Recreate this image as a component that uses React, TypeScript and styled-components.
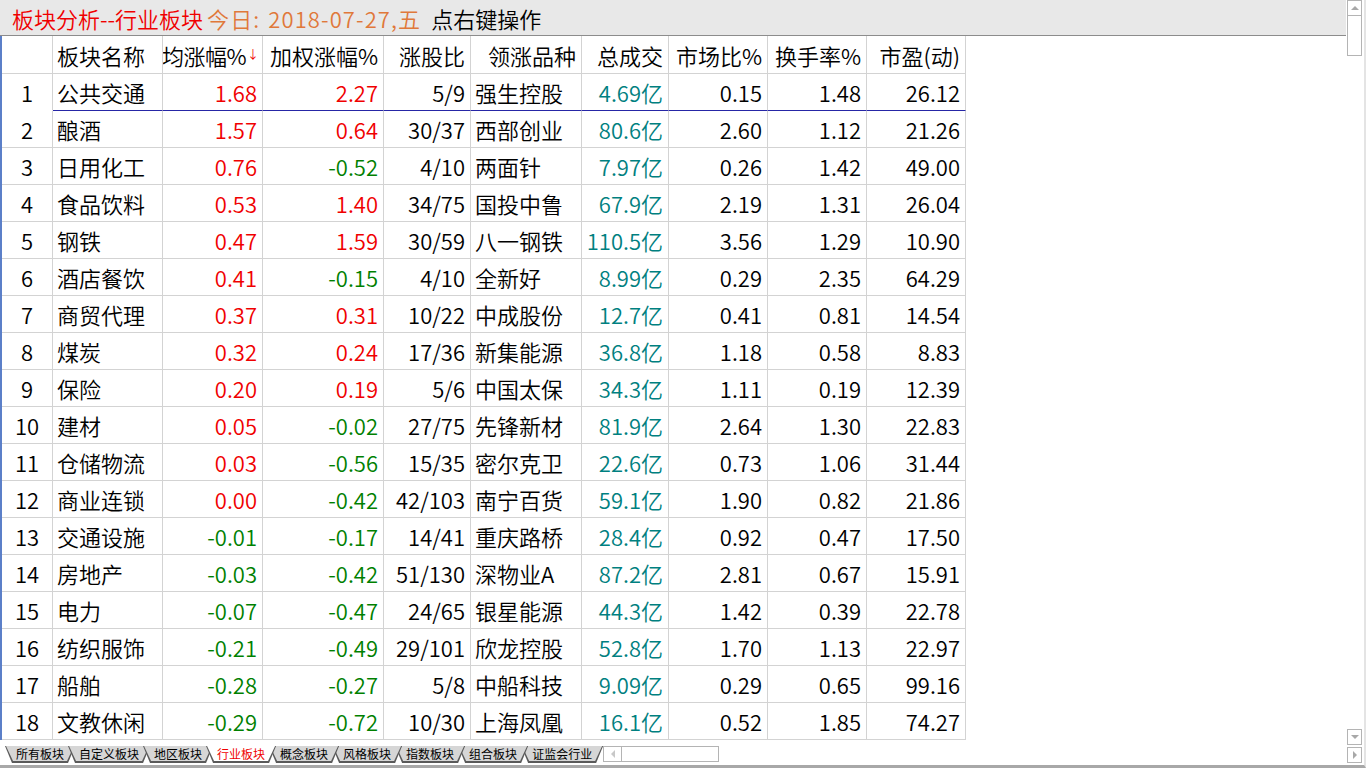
import React from 'react';
import styled, { createGlobalStyle, css } from 'styled-components';

const GlobalStyle = createGlobalStyle`
  html, body {
    margin: 0;
    padding: 0;
    background: #ffffff;
    overflow: hidden;
  }
  body {
    font-family: "Noto Sans CJK SC", "Noto Sans", sans-serif;
    font-weight: 350;
  }
`;

type Row = [string, string, string, string, string, string, string, string, string];

const rows: Row[] = [
  ['公共交通', '1.68', '2.27', '5/9', '强生控股', '4.69亿', '0.15', '1.48', '26.12'],
  ['酿酒', '1.57', '0.64', '30/37', '西部创业', '80.6亿', '2.60', '1.12', '21.26'],
  ['日用化工', '0.76', '-0.52', '4/10', '两面针', '7.97亿', '0.26', '1.42', '49.00'],
  ['食品饮料', '0.53', '1.40', '34/75', '国投中鲁', '67.9亿', '2.19', '1.31', '26.04'],
  ['钢铁', '0.47', '1.59', '30/59', '八一钢铁', '110.5亿', '3.56', '1.29', '10.90'],
  ['酒店餐饮', '0.41', '-0.15', '4/10', '全新好', '8.99亿', '0.29', '2.35', '64.29'],
  ['商贸代理', '0.37', '0.31', '10/22', '中成股份', '12.7亿', '0.41', '0.81', '14.54'],
  ['煤炭', '0.32', '0.24', '17/36', '新集能源', '36.8亿', '1.18', '0.58', '8.83'],
  ['保险', '0.20', '0.19', '5/6', '中国太保', '34.3亿', '1.11', '0.19', '12.39'],
  ['建材', '0.05', '-0.02', '27/75', '先锋新材', '81.9亿', '2.64', '1.30', '22.83'],
  ['仓储物流', '0.03', '-0.56', '15/35', '密尔克卫', '22.6亿', '0.73', '1.06', '31.44'],
  ['商业连锁', '0.00', '-0.42', '42/103', '南宁百货', '59.1亿', '1.90', '0.82', '21.86'],
  ['交通设施', '-0.01', '-0.17', '14/41', '重庆路桥', '28.4亿', '0.92', '0.47', '17.50'],
  ['房地产', '-0.03', '-0.42', '51/130', '深物业A', '87.2亿', '2.81', '0.67', '15.91'],
  ['电力', '-0.07', '-0.47', '24/65', '银星能源', '44.3亿', '1.42', '0.39', '22.78'],
  ['纺织服饰', '-0.21', '-0.49', '29/101', '欣龙控股', '52.8亿', '1.70', '1.13', '22.97'],
  ['船舶', '-0.28', '-0.27', '5/8', '中船科技', '9.09亿', '0.29', '0.65', '99.16'],
  ['文教休闲', '-0.29', '-0.72', '10/30', '上海凤凰', '16.1亿', '0.52', '1.85', '74.27'],
];

const tabs = ['所有板块', '自定义板块', '地区板块', '行业板块', '概念板块', '风格板块', '指数板块', '组合板块', '证监会行业'];
const activeTab = 3;

const COLS = '51px 110px 100px 121px 87px 111px 87px 99px 99px 99px';

const Frame = styled.div`
  width: 1366px;
  height: 768px;
  display: flex;
  box-sizing: border-box;
  border-bottom: 3px solid #a8a8a8;
  border-right: 2px solid #e4e4e4;
  overflow: hidden;
`;

const Main = styled.div`
  flex: 1;
  display: flex;
  flex-direction: column;
  min-width: 0;
`;

const TitleBar = styled.div`
  height: 35px;
  border-bottom: 1px solid #8c8c8c;
  background: #e8e8e8;
  display: flex;
  align-items: center;
  padding-left: 12px;
  font-size: 22px;
  white-space: nowrap;
  line-height: 1;
`;

const Title = styled.span<{ $tone: 'red' | 'orange' | 'black' }>`
  color: ${(p) => (p.$tone === 'red' ? '#f00000' : p.$tone === 'orange' ? '#e0783a' : '#000000')};
  margin-right: ${(p) => (p.$tone === 'orange' ? '10px' : '4px')};
  letter-spacing: ${(p) => (p.$tone === 'orange' ? '1.1px' : '0')};
  word-spacing: ${(p) => (p.$tone === 'orange' ? '2px' : '0')};
`;

const TableArea = styled.div`
  flex: 1;
  border-left: 2px solid #5b7fc8;
  display: flex;
  flex-direction: column;
`;

const GridRow = styled.div<{ $head?: boolean }>`
  display: grid;
  grid-template-columns: ${COLS};
  height: ${(p) => (p.$head ? '38px' : '37px')};
`;

const Cell = styled.div<{ $align?: 'left' | 'right' | 'center'; $color?: string; $sel?: boolean; $first?: boolean }>`
  box-sizing: border-box;
  border-right: 1px solid #d3d3d3;
  border-bottom: 1px solid #d3d3d3;
  display: flex;
  align-items: center;
  justify-content: ${(p) => (p.$align === 'left' ? 'flex-start' : p.$align === 'center' ? 'center' : 'flex-end')};
  padding: ${(p) => (p.$align === 'left' ? '0 0 0 4px' : p.$align === 'center' ? '0' : '0 5px 0 0')};
  font-size: 22px;
  color: ${(p) => p.$color || '#000000'};
  white-space: nowrap;
  overflow: hidden;
  ${(p) =>
    p.$sel &&
    css`
      border-bottom-color: ${p.$first ? '#ffffff' : '#2626a6'};
    `}
`;

const SortCell = styled(Cell)`
  padding-right: 3px;
  letter-spacing: -0.5px;
`;

const SortArrow = styled.span`
  color: #f00000;
  font-size: 12px;
  margin-left: 1px;
  align-self: flex-start;
  margin-top: 9px;
  letter-spacing: 0;
`;

const TabBar = styled.div`
  height: 25px;
  display: flex;
  align-items: flex-start;
  padding: 6px 0 0 5px;
  box-sizing: border-box;
`;

const TabOuter = styled.div<{ $z: number }>`
  position: relative;
  z-index: ${(p) => p.$z};
  height: 16px;
  margin-right: -7px;
  background: #5a5a5a;
  padding: 0 1px 1px 1px;
  clip-path: polygon(0 0, 100% 0, calc(100% - 7px) 100%, 7px 100%);
`;

const TabInner = styled.div<{ $active?: boolean }>`
  height: 15px;
  padding: 0 10px;
  display: flex;
  align-items: center;
  font-size: 12px;
  font-weight: 400;
  line-height: 1;
  background: ${(p) => (p.$active ? '#ffffff' : '#d6d6d6')};
  color: ${(p) => (p.$active ? '#f00000' : '#000000')};
  clip-path: polygon(0 0, 100% 0, calc(100% - 7px) 100%, 7px 100%);
`;

const HScroll = styled.div`
  margin-left: 7px;
  width: 116px;
  height: 16px;
  box-sizing: border-box;
  border: 1px solid #b4b4b4;
  display: flex;
`;

const ArrowBox = styled.div<{ $dir: 'up' | 'down' | 'left' | 'right' }>`
  width: 15px;
  height: 16px;
  box-sizing: border-box;
  display: flex;
  align-items: center;
  justify-content: center;
  border: 1px solid #b4b4b4;
  background: #ffffff;
  &::after {
    content: '';
    width: 0;
    height: 0;
    ${(p) =>
      p.$dir === 'up'
        ? css`border-left: 4px solid transparent; border-right: 4px solid transparent; border-bottom: 4px solid #a8a8a8;`
        : p.$dir === 'down'
        ? css`border-left: 4px solid transparent; border-right: 4px solid transparent; border-top: 4px solid #a8a8a8;`
        : p.$dir === 'left'
        ? css`border-top: 4px solid transparent; border-bottom: 4px solid transparent; border-right: 4px solid #c8c8c8;`
        : css`border-top: 4px solid transparent; border-bottom: 4px solid transparent; border-left: 4px solid #a8a8a8;`}
  }
`;

const HLeft = styled(ArrowBox)`
  border: none;
  border-right: 1px solid #b4b4b4;
  height: 14px;
  width: 18px;
`;

const VScroll = styled.div`
  width: 17px;
  display: flex;
  flex-direction: column;
  align-items: center;
  padding-right: 1px;
`;

const Thumb = styled.div`
  width: 15px;
  height: 40px;
  box-sizing: border-box;
  border: 1px solid #b4b4b4;
  border-top: none;
`;

const Spacer = styled.div`
  flex: 1;
`;

const VGap = styled.div`
  height: 2px;
`;

const red = '#f00000';
const green = '#008000';
const teal = '#008080';
const signColor = (v: string) => (v.startsWith('-') ? green : red);

export default function App() {
  return (
    <>
      <GlobalStyle />
      <Frame>
        <Main>
          <TitleBar>
            <Title $tone="red">板块分析--行业板块</Title>
            <Title $tone="orange">今日: 2018-07-27,五</Title>
            <Title $tone="black">点右键操作</Title>
          </TitleBar>
          <TableArea>
            <GridRow $head>
              <Cell $align="center" />
              <Cell $align="left">板块名称</Cell>
              <SortCell>
                均涨幅%<SortArrow>↓</SortArrow>
              </SortCell>
              <Cell>加权涨幅%</Cell>
              <Cell>涨股比</Cell>
              <Cell>领涨品种</Cell>
              <Cell>总成交</Cell>
              <Cell>市场比%</Cell>
              <Cell>换手率%</Cell>
              <Cell>市盈(动)</Cell>
            </GridRow>
            {rows.map((r, i) => {
              const sel = i === 0;
              return (
                <GridRow key={r[0]}>
                  <Cell $align="center" $sel={sel} $first>
                    {i + 1}
                  </Cell>
                  <Cell $align="left" $sel={sel}>{r[0]}</Cell>
                  <Cell $sel={sel} $color={signColor(r[1])}>{r[1]}</Cell>
                  <Cell $sel={sel} $color={signColor(r[2])}>{r[2]}</Cell>
                  <Cell $sel={sel}>{r[3]}</Cell>
                  <Cell $align="left" $sel={sel}>{r[4]}</Cell>
                  <Cell $sel={sel} $color={teal}>{r[5]}</Cell>
                  <Cell $sel={sel}>{r[6]}</Cell>
                  <Cell $sel={sel}>{r[7]}</Cell>
                  <Cell $sel={sel}>{r[8]}</Cell>
                </GridRow>
              );
            })}
          </TableArea>
          <TabBar>
            {tabs.map((t, i) => (
              <TabOuter key={t} $z={i === activeTab ? 50 : i < activeTab ? i + 1 : 40 - i}>
                <TabInner $active={i === activeTab}>{t}</TabInner>
              </TabOuter>
            ))}
            <HScroll>
              <HLeft $dir="left" />
            </HScroll>
          </TabBar>
        </Main>
        <VScroll>
          <ArrowBox $dir="up" />
          <Thumb />
          <Spacer />
          <ArrowBox $dir="down" />
          <VGap />
          <ArrowBox $dir="right" />
          <VGap />
        </VScroll>
      </Frame>
    </>
  );
}
